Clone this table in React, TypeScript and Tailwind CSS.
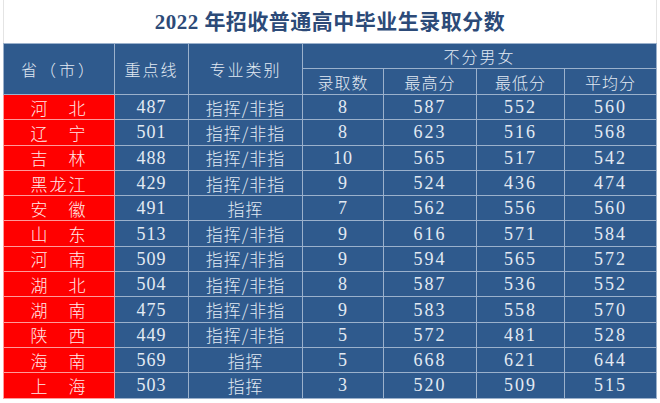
const rows: [string, string, string, string, string, string, string][] = [
  ["河　北", "487", "指挥/非指", "8", "587", "552", "560"],
  ["辽　宁", "501", "指挥/非指", "8", "623", "516", "568"],
  ["吉　林", "488", "指挥/非指", "10", "565", "517", "542"],
  ["黑龙江", "429", "指挥/非指", "9", "524", "436", "474"],
  ["安　徽", "491", "指挥", "7", "562", "556", "560"],
  ["山　东", "513", "指挥/非指", "9", "616", "571", "584"],
  ["河　南", "509", "指挥/非指", "9", "594", "565", "572"],
  ["湖　北", "504", "指挥/非指", "8", "587", "536", "552"],
  ["湖　南", "475", "指挥/非指", "9", "583", "558", "570"],
  ["陕　西", "449", "指挥/非指", "5", "572", "481", "528"],
  ["海　南", "569", "指挥", "5", "668", "621", "644"],
  ["上　海", "503", "指挥", "3", "520", "509", "515"],
];

const cjk = "font-['Noto_Sans_CJK_SC',sans-serif]";
const num = "font-['Liberation_Serif','Noto_Sans_CJK_SC',serif]";
const cell = "border border-[#9bb1cc] text-center align-middle p-0 leading-none";

export default function App() {
  return (
    <div className="w-[660px] h-[403px] bg-white overflow-hidden">
      <div className="ml-[3px] w-[654px] border-x border-[#e4e4e4] h-[43px] flex items-center justify-center pt-[1px]">
        <h1 className="text-[21px] font-bold text-[#2c4a78] tracking-[0.5px]">
          <span className={num}>2022 </span>
          <span className={cjk}>年招收普通高中毕业生录取分数</span>
        </h1>
      </div>
      <table className="ml-[3px] w-[653px] table-fixed border-collapse bg-[#2f5a8d] text-[#e3eaf3]">
        <colgroup>
          <col className="w-[111px]" />
          <col className="w-[74px]" />
          <col className="w-[114px]" />
          <col className="w-[81px]" />
          <col className="w-[93px]" />
          <col className="w-[88px]" />
          <col className="w-[92px]" />
        </colgroup>
        <thead className={`${cjk} text-[16px] font-light`}>
          <tr className="h-[25px]">
            <th rowSpan={2} className={`${cell} font-light tracking-[3px]`}>省（市）</th>
            <th rowSpan={2} className={`${cell} font-light tracking-[2px]`}>重点线</th>
            <th rowSpan={2} className={`${cell} font-light tracking-[2px]`}>专业类别</th>
            <th colSpan={4} className={`${cell} font-light tracking-[2px]`}>不分男女</th>
          </tr>
          <tr className="h-[26px]">
            <th className={`${cell} font-light tracking-[1px]`}>录取数</th>
            <th className={`${cell} font-light tracking-[1px]`}>最高分</th>
            <th className={`${cell} font-light tracking-[1px]`}>最低分</th>
            <th className={`${cell} font-light tracking-[1px]`}>平均分</th>
          </tr>
        </thead>
        <tbody>
          {rows.map((r) => (
            <tr key={r[0]} className="h-[25.3px]">
              <td className={`${cell} ${cjk} bg-[#ff0000] border-[#ff9a9a] text-[17px] font-light tracking-[2px] text-[#ffe9e9]`}>{r[0]}</td>
              <td className={`${cell} ${num} text-[18px] tracking-[1px]`}>{r[1]}</td>
              <td className={`${cell} ${cjk} text-[17px] font-light tracking-[1px]`}>{r[2]}</td>
              <td className={`${cell} ${num} text-[18px] tracking-[1px]`}>{r[3]}</td>
              <td className={`${cell} ${num} text-[18px] tracking-[2px]`}>{r[4]}</td>
              <td className={`${cell} ${num} text-[18px] tracking-[2px]`}>{r[5]}</td>
              <td className={`${cell} ${num} text-[18px] tracking-[2px]`}>{r[6]}</td>
            </tr>
          ))}
        </tbody>
      </table>
    </div>
  );
}
